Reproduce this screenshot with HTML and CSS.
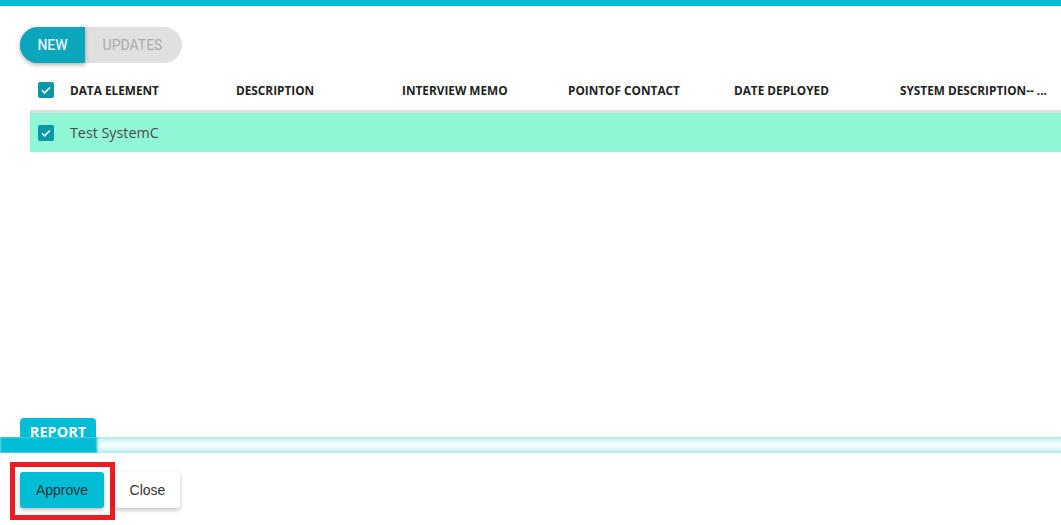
FILE: index.html
```html
<!DOCTYPE html>
<html lang="en">
<head>
<meta charset="utf-8">
<title>Data elements</title>
<link rel="stylesheet" href="styles.css">
</head>
<body>
<div class="topbar"></div>
<main class="panel">
  <div class="toggle">
    <button class="seg seg-active">NEW</button>
    <button class="seg">UPDATES</button>
  </div>
  <div class="grid">
    <div class="row head">
      <span class="cb"><svg viewBox="0 0 16 16"><path d="M4 8.3l2.6 2.6L12 5.5" /></svg></span>
      <span class="cell">DATA ELEMENT</span>
      <span class="cell">DESCRIPTION</span>
      <span class="cell">INTERVIEW MEMO</span>
      <span class="cell">POINTOF CONTACT</span>
      <span class="cell">DATE DEPLOYED</span>
      <span class="cell">SYSTEM DESCRIPTION-- ...</span>
    </div>
    <div class="row item">
      <span class="cb"><svg viewBox="0 0 16 16"><path d="M4 8.3l2.6 2.6L12 5.5" /></svg></span>
      <span class="cell">Test SystemC</span>
    </div>
  </div>
</main>
<section class="report">
  <div class="tab">REPORT</div>
  <div class="bar"><div class="bar-fill"></div></div>
</section>
<footer class="actions">
  <div class="focus-ring"><button class="btn btn-primary">Approve</button></div>
  <button class="btn">Close</button>
</footer>
</body>
</html>
```

FILE: styles.css
```css
html, body {
  margin: 0;
  padding: 0;
  background: #fff;
}

body {
  width: 1061px;
  height: 525px;
  overflow: hidden;
  display: flex;
  flex-direction: column;
  font-family: "Open Sans", "Liberation Sans", sans-serif;
}

.topbar {
  height: 6px;
  background: #00bcd4;
  flex: none;
}

.panel {
  flex: 1;
  padding: 21px 0 0 20px;
}

/* segmented toggle */
.toggle {
  display: inline-flex;
  height: 36px;
  background: #e0e0e0;
  border-radius: 18px;
}

.seg {
  border: 0;
  background: transparent;
  font-family: Roboto, "Liberation Sans", sans-serif;
  font-size: 14px;
  color: #ababab;
  height: 36px;
  cursor: pointer;
}

.seg-active {
  background: #0aa6bc;
  color: #e3f3f5;
  font-weight: 500;
  border-radius: 18px 0 0 18px;
  box-shadow: 0 2px 4px rgba(0, 0, 0, 0.3);
  width: 65px;
  padding: 0;
}

.seg:last-child {
  width: 97px;
  padding: 0 2px 0 0;
}

/* table */
.grid {
  margin: 7px 0 0 10px;
}

.row {
  display: flex;
  align-items: center;
  padding-left: 8px;
}

.head {
  height: 40px;
  border-bottom: 3px solid #dedede;
}

.item {
  height: 39px;
  background: #90f7d6;
}

.cb {
  width: 16px;
  height: 16px;
  background: #0a98a8;
  border-radius: 2px;
  margin-right: 16px;
  flex: none;
  display: flex;
}

.cb svg {
  width: 16px;
  height: 16px;
  fill: none;
  stroke: #fff;
  stroke-width: 1.6;
}

.cell {
  width: 166px;
  flex: none;
  white-space: nowrap;
}

.head .cell {
  font-size: 11.8px;
  font-weight: 700;
  color: #222;
}

.item .cell {
  font-size: 14.3px;
  color: #4a4a4a;
}

/* report strip */
.report {
  flex: none;
  height: 35px;
  display: flex;
  flex-direction: column;
}

.tab {
  margin-left: 20px;
  width: 76px;
  height: 19px;
  background: #00bcd4;
  border-radius: 4px 4px 0 0;
  color: #fff;
  font-weight: 700;
  font-size: 14.5px;
  line-height: 28px;
  text-align: center;
  position: relative;
  z-index: 1;
}

.bar {
  height: 16px;
  background: linear-gradient(#a9e6ef 0, #d6f4f8 3px, #fafeff 8px, #d6f4f8 13px, #a9e6ef 16px);
  overflow: hidden;
}

.bar-fill {
  width: 97px;
  height: 16px;
  background: #00bcd4;
  filter: blur(1px);
}

/* actions */
.actions {
  flex: none;
  display: flex;
  align-items: flex-start;
  padding: 9px 0 0 10px;
  height: 63px;
}

.focus-ring {
  border: 5px solid #ed1c24;
  padding: 5px 6px 7px 5px;
}

.btn {
  height: 36px;
  border: 0;
  border-radius: 3px;
  background: #fff;
  color: #333;
  font-family: "Liberation Sans", Arial, sans-serif;
  font-size: 14px;
  width: 65px;
  box-shadow: 0 2px 4px rgba(0, 0, 0, 0.25);
  margin-top: 10px;
}

.btn-primary {
  width: 84px;
  background: #00bcd4;
  color: #17343a;
  margin-top: 0;
}
```
